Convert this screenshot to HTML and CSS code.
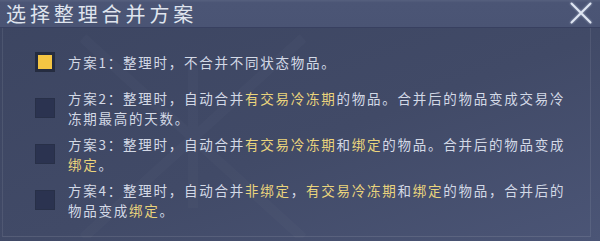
FILE: index.html
```html
<!DOCTYPE html>
<html lang="zh-CN">
<head>
<meta charset="utf-8">
<title>选择整理合并方案</title>
<link rel="stylesheet" href="styles.css">
</head>
<body>
<div class="dialog">
  <header class="titlebar">
    <h1 class="title">选择整理合并方案</h1>
    <button class="close" aria-label="关闭">
      <svg width="22" height="22" viewBox="0 0 22 22">
        <path d="M1.5 1.5 L20.5 20.5 M20.5 1.5 L1.5 20.5" stroke="#dfe6f2" stroke-width="2" stroke-linecap="round" fill="none"/>
      </svg>
    </button>
  </header>
  <section class="panel">
    <svg class="watermark" width="300" height="210" viewBox="0 0 300 210" aria-hidden="true">
      <path d="M40 10 L150 110 L260 10 M40 210 L150 110 L260 210 M150 40 L150 180" stroke="#ffffff" stroke-opacity="0.018" stroke-width="10" fill="none"/>
    </svg>
    <ul class="options">
      <li class="option">
        <span class="box checked"></span>
        <p class="text">方案1：整理时，不合并不同状态物品。</p>
      </li>
      <li class="option">
        <span class="box"></span>
        <p class="text"><span class="line">方案2：整理时，自动合并<em>有交易冷冻期</em>的物品。合并后的物品变成交易冷</span><span class="line">冻期最高的天数。</span></p>
      </li>
      <li class="option">
        <span class="box"></span>
        <p class="text"><span class="line">方案3：整理时，自动合并<em>有交易冷冻期</em>和<em>绑定</em>的物品。合并后的物品变成</span><span class="line"><em>绑定</em>。</span></p>
      </li>
      <li class="option">
        <span class="box"></span>
        <p class="text"><span class="line">方案4：整理时，自动合并<em>非绑定</em>，<em>有交易冷冻期</em>和<em>绑定</em>的物品，合并后的</span><span class="line">物品变成<em>绑定</em>。</span></p>
      </li>
    </ul>
  </section>
</div>
</body>
</html>
```

FILE: styles.css
```css
* { box-sizing: border-box; }

html, body {
  margin: 0;
  padding: 0;
}

body {
  width: 600px;
  height: 241px;
  overflow: hidden;
  background: #3e4763;
  font-family: "Noto Sans CJK SC", "Noto Sans", sans-serif;
  color: #d3d9e6;
}

.dialog {
  width: 600px;
  height: 241px;
  display: flex;
  flex-direction: column;
  background: linear-gradient(160deg, #3c4561 0%, #414a67 55%, #4b5576 100%);
}

.titlebar {
  height: 28px;
  flex: none;
  display: flex;
  align-items: center;
  justify-content: space-between;
  padding: 0 8px 0 6px;
  background: linear-gradient(180deg, #56607e 0%, #4b5575 10%, #4a5474 100%);
  border-bottom: 1px solid #384060;
}

.title {
  margin: 0;
  font-size: 20px;
  font-weight: 400;
  line-height: 26px;
  letter-spacing: 3.9px;
  color: #dfe4ee;
}

.close {
  margin: 0;
  padding: 0;
  border: 0;
  background: none;
  width: 22px;
  height: 22px;
  align-self: flex-start;
  margin-top: 2px;
  filter: drop-shadow(0 0 1px rgba(220, 230, 250, 0.6));
}

.close svg { display: block; }

.panel {
  position: relative;
  flex: 1;
  margin: 0 9px 4px 2px;
  border-left: 1px solid rgba(255, 255, 255, 0.08);
  border-right: 1px solid rgba(255, 255, 255, 0.08);
  border-bottom: 1px solid rgba(255, 255, 255, 0.1);
  padding-top: 11px;
}

.watermark {
  position: absolute;
  left: 40px;
  top: 0;
}

.options {
  position: relative;
  list-style: none;
  margin: 0;
  padding: 0 0 0 32px;
}

.option {
  height: 46px;
  display: flex;
  align-items: center;
  gap: 13px;
}

.box {
  flex: none;
  width: 20px;
  height: 20px;
  background: #2b3350;
  border: 1px solid #283048;
}

.box.checked {
  background: #f4c543;
  border: 3px solid #252c40;
}

.text {
  margin: 0;
  width: 505px;
  font-size: 13.5px;
  line-height: 20px;
  letter-spacing: 1.75px;
  color: #d3d9e6;
}

.line {
  display: block;
  white-space: nowrap;
}

.text em {
  font-style: normal;
  color: #ead47c;
}
```
